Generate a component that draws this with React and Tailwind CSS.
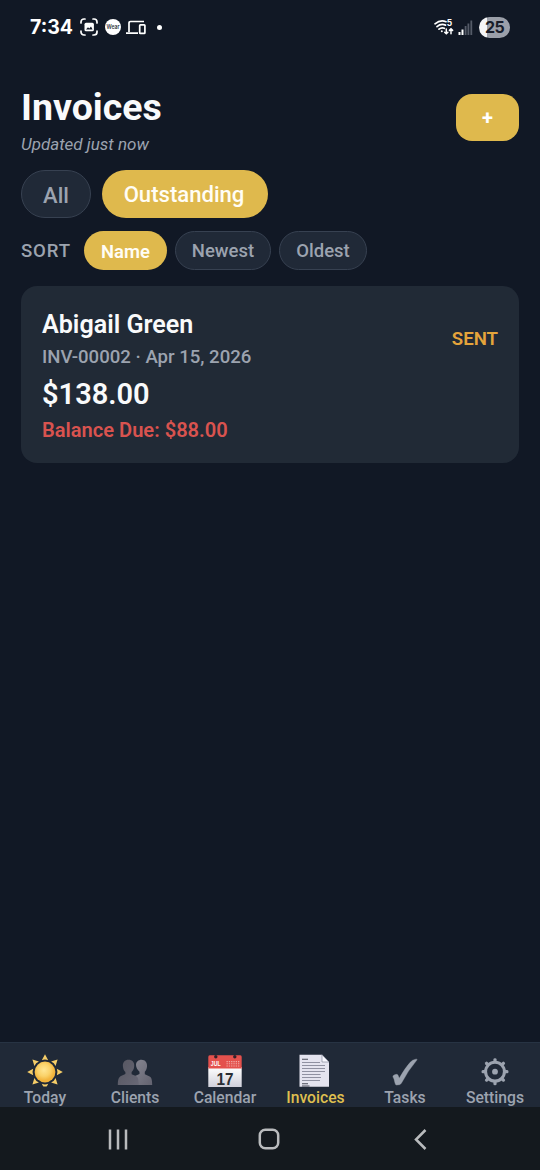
import React from "react";

function StatusBar() {
  return (
    <div className="flex h-[54px] items-center justify-between pl-[30px] pr-[30px] text-white">
      <div className="flex items-center">
        <span className="w-[50px] font-['Inter'] text-[19.5px] font-bold leading-[24px]">7:34</span>
        <svg width="18" height="18" viewBox="0 0 18 18" fill="none" stroke="white" strokeWidth="1.7" strokeLinecap="round">
          <path d="M1 5V4a3 3 0 0 1 3-3h1M13 1h1a3 3 0 0 1 3 3v1M17 13v1a3 3 0 0 1-3 3h-1M5 17H4a3 3 0 0 1-3-3v-1" />
          <rect x="4.5" y="4.7" width="9.4" height="8.6" rx="1.5" fill="white" stroke="none" />
          <path d="M6 11.5l2-2.2 1.3 1.1 1.7-2 1.6 3.1z" fill="#111827" stroke="none" />
        </svg>
        <svg className="ml-[7px]" width="16" height="16" viewBox="0 0 16 16">
          <circle cx="8" cy="8" r="8" fill="white" />
          <text x="8" y="10.2" textAnchor="middle" fontFamily="Inter, sans-serif" fontSize="5.6" fontWeight="600" textLength="13" lengthAdjust="spacingAndGlyphs" fill="#303540">Wear</text>
        </svg>
        <svg className="ml-[5px]" width="20" height="15" viewBox="0 0 20 15" fill="none" stroke="white" strokeWidth="1.7">
          <path d="M3 12V3.2Q3 1.5 4.6 1.5H18M0 13.2H12" />
          <rect x="13.7" y="4.8" width="5.2" height="8.6" rx=".7" />
        </svg>
        <i className="ml-[11px] h-[5px] w-[5px] rounded-full bg-white" />
      </div>
      <div className="flex items-center">
        <svg width="20" height="17" viewBox="0 0 20 17" fill="none" stroke="white" strokeWidth="1.7" strokeLinecap="round">
          <path d="M1 4.8Q6.5 .2 12 2.7M3 7.6Q7 4.3 11.5 6.1M5 10.2Q7.6 8.1 10.3 9.3" />
          <circle cx="7.8" cy="12.2" r="1" fill="white" stroke="none" />
          <path d="M12.3 10v4.5M10.7 13.2l1.6 1.6 1.6-1.6M17 14.8V10M15.4 11.4L17 9.8l1.6 1.6" strokeWidth="1.5" />
          <text x="12.8" y="7.4" fontFamily="Inter, sans-serif" fontSize="8.5" fontWeight="700" fill="white" stroke="none">5</text>
        </svg>
        <svg className="ml-[4px]" width="15" height="15" viewBox="0 0 15 15">
          <path d="M.5 12h2v3h-2zM3.5 9.5h2V15h-2z" fill="white" />
          <path d="M6.7 6h1.8v9H6.7zM9.5 3.5h1.8V15H9.5zM12.4 .4h1.8V15h-1.8z" fill="#555b68" />
        </svg>
        <div className="ml-[6px] flex h-[21px] w-[31px] items-center justify-center rounded-full bg-[linear-gradient(90deg,#f4f5f7_25%,#9b9fa9_25%)] font-['Inter'] text-[16px] font-bold leading-none tracking-[-0.7px] text-[#171c29]">25</div>
      </div>
    </div>
  );
}

function SunIcon() {
  return (
    <svg width="36" height="34" viewBox="0 0 36 34">
      <defs>
        <radialGradient id="sun" cx=".45" cy=".4">
          <stop offset="0" stopColor="#ffe693" />
          <stop offset=".6" stopColor="#fad269" />
          <stop offset="1" stopColor="#f2b43c" />
        </radialGradient>
        <clipPath id="sunbox">
          <path d="M0 0h36v32.500H0z" />
        </clipPath>
      </defs>
      <g clipPath="url(#sunbox)">
        {[0, 45, 90, 135, 180, 225, 270, 315].map((a) => (
          <path key={a} d="M18 .2l3.200 6q-3.200-1.300-6.400 0z" fill="#f5cd68" transform={`rotate(${a} 18 18)`} />
        ))}
      </g>
      <circle cx="18" cy="18" r="10.400" fill="url(#sun)" />
    </svg>
  );
}

function ClientsIcon() {
  return (
    <svg width="36" height="34" viewBox="0 0 36 34">
      <defs>
        <linearGradient id="front" x1="0" x2="1" y2="1">
          <stop offset="0" stopColor="#55555f" />
          <stop offset="1" stopColor="#686876" />
        </linearGradient>
        <linearGradient id="back" x1="0" x2="1" y2="1">
          <stop offset="0" stopColor="#858590" />
          <stop offset="1" stopColor="#62626f" />
        </linearGradient>
      </defs>
      <path d="M24.5 5.7c3.6 0 6 2.8 5.5 7-.3 2.8-1.3 4.3-2.2 5.1v2.4l4.4 2c2.3 1.1 3 3.5 3 8.800H18V22l4.5-2v-2.3C20.600 16 19 13.500 19 11c0-3.200 2.300-5.300 5.500-5.300z" fill="url(#back)" />
      <path d="M11.500 5.700c3.800 0 6.100 2.600 5.700 6.500-.2 2.800-1.300 4.700-2.600 5.700v2.300l4.300 1.700c2.200 1 2.800 3.500 2.800 9.100H.8c0-5.400.8-8 3.200-9.100l4.400-1.800v-2.200c-1.400-1.200-2.300-3-2.500-5.700-.3-3.900 2-6.500 5.600-6.500z" fill="url(#front)" />
    </svg>
  );
}

function CalendarIcon() {
  return (
    <svg width="36" height="34" viewBox="0 0 36 34">
      <defs>
        <linearGradient id="page" x2="0" y2="1">
          <stop offset="0" stopColor="#ffffff" />
          <stop offset="1" stopColor="#d0d0da" />
        </linearGradient>
      </defs>
      <path d="M1.300 13h33.400v20H1.300z" fill="url(#page)" />
      <path d="M1.300 3Q1.300 1.300 2.700 1.300h30.600q1.400 0 1.400 1.700v11.500H1.300z" fill="#e4514d" />
      <circle cx="8.800" cy="2.700" r="1.700" fill="#30202a" />
      <circle cx="27.800" cy="2.700" r="1.700" fill="#30202a" />
      <path d="M19.500 7.600h13M19.500 9.800h13M19.500 12h13" stroke="#f0aaa6" strokeWidth="1.100" strokeDasharray="1.300 1" />
      <text x="3.800" y="12" fontFamily="Liberation Sans, sans-serif" fontSize="6.800" fontWeight="700" textLength="9.800" lengthAdjust="spacingAndGlyphs" fill="white">JUL</text>
      <text x="18" y="31" textAnchor="middle" fontFamily="Liberation Sans, sans-serif" fontSize="17" fontWeight="700" textLength="17" lengthAdjust="spacingAndGlyphs" fill="#292d33">17</text>
    </svg>
  );
}

function InvoiceIcon() {
  return (
    <svg width="36" height="34" viewBox="0 0 36 34">
      <path d="M2.500 .7h22.500l7 7.300v24.700H2.500z" fill="#e4e4ef" />
      <path d="M25 .7v7.300h7z" fill="#f8f8ff" stroke="#74788a" strokeWidth=".6" />
      <path d="M5 8.500H23M5 11.500H28M5 14.500H28M5 17.500H28M5 20.500H23.500M5 23.500H24M5 26.500H23" stroke="#8f91a1" strokeWidth="1.100" />
      <path d="M5 5.300H11M5 29.800H11M5 32H12.500" stroke="#484b58" strokeWidth="1.100" />
    </svg>
  );
}

function CheckIcon() {
  return (
    <svg width="36" height="34" viewBox="0 0 36 34">
      <path d="M30.200 5.600Q21 16.500 14.200 29.500Q13.300 31 9.500 31Q8.400 31 8 29Q7.200 24.500 5.900 22.800Q5.500 21.700 7.700 20.700Q10.400 19.700 11.100 21.300L12.200 24.300Q18 14 23.200 8.300Q25.400 5.700 28.800 5.200Q30 5 30.200 5.600Z" fill="#9ca3af" stroke="#9ca3af" strokeWidth=".4" />
    </svg>
  );
}

function GearIcon() {
  return (
    <svg width="36" height="34" viewBox="0 0 36 34">
      {[0, 45, 90, 135, 180, 225, 270, 315].map((a) => (
        <path key={a} d="M16.400 8.500V5.500Q16.400 4.200 18 4.200T19.600 5.500V8.500z" fill="#9ca3af" transform={`rotate(${a} 18 17.700)`} />
      ))}
      <circle cx="18" cy="17.700" r="9.400" fill="none" stroke="#9ca3af" strokeWidth="3" />
      <circle cx="18" cy="17.700" r="2.900" fill="#9ca3af" />
    </svg>
  );
}

const tabs = [
  { label: "Today", Icon: SunIcon },
  { label: "Clients", Icon: ClientsIcon },
  { label: "Calendar", Icon: CalendarIcon },
  { label: "Invoices", Icon: InvoiceIcon, active: true },
  { label: "Tasks", Icon: CheckIcon },
  { label: "Settings", Icon: GearIcon },
];

export default function App() {
  return (
    <div className="flex h-[1170px] w-[540px] flex-col overflow-hidden bg-[#111825] font-['Roboto',sans-serif]">
      <StatusBar />
      <main className="flex flex-1 flex-col px-[21px] pt-[31px]">
        <header className="flex h-[85px] items-start justify-between">
          <div>
            <h1 className="text-[37.500px] font-bold leading-[44px] text-[#f9fafb]">Invoices</h1>
            <p className="mt-[5px] text-[17px] italic leading-[20px] text-[#9ca3af]">Updated just now</p>
          </div>
          <button className="mt-[8.500px] flex h-[47px] w-[63px] items-center justify-center rounded-[16px] bg-[#dfb94d] pt-[2px] text-[20px] font-bold text-white">+</button>
        </header>
        <div className="flex gap-[11px]">
          <button className="h-[48px] w-[70px] rounded-full border border-[#374151] bg-[#202937] pt-[2px] text-[22px] font-medium text-[#9ca3af]">All</button>
          <button className="h-[48px] w-[166px] rounded-full bg-[#dfb94d] pr-[2px] pt-[2px] text-[22.100px] font-medium text-[#fffdf5]">Outstanding</button>
        </div>
        <div className="mt-[13px] flex items-center">
          <span className="w-[63px] pt-[2px] text-[18.600px] font-medium tracking-[0.850px] text-[#9ca3af]">SORT</span>
          <button className="h-[39px] w-[83px] rounded-full bg-[#dfb94d] pt-[2px] text-[18.400px] font-semibold text-[#fffdf5]">Name</button>
          <button className="ml-[8px] h-[39px] w-[96px] rounded-full border border-[#374151] bg-[#202937] pt-[2px] text-[18.500px] font-medium text-[#9ca3af]">Newest</button>
          <button className="ml-[8px] h-[39px] w-[88px] rounded-full border border-[#374151] bg-[#202937] pt-[2px] text-[18.500px] font-medium text-[#9ca3af]">Oldest</button>
        </div>
        <section className="mt-[16px] flex h-[177px] items-start justify-between rounded-[16px] bg-[#212a36] px-[21px] pt-[24px]">
          <div>
            <h2 className="text-[25.100px] font-semibold leading-[30px] text-[#f9fafb]">Abigail Green</h2>
            <p className="mt-[5px] text-[18.600px] font-medium leading-[24px] text-[#9ca3af]">INV-00002 · Apr 15, 2026</p>
            <p className="mt-[7px] text-[29px] font-semibold leading-[36px] text-[#f9fafb]">$138.00</p>
            <p className="mt-[6px] text-[20.100px] font-semibold leading-[24px] text-[#d9534f]">Balance Due: $88.00</p>
          </div>
          <span className="mt-[17px] text-[18.600px] font-semibold leading-[24px] text-[#e5a43b]">SENT</span>
        </section>
      </main>
      <nav className="grid h-[65px] grid-cols-6 border-t border-[#273343] bg-[#202937] pt-[11px]">
        {tabs.map(({ label, Icon, active }) => (
          <div key={label} className="flex flex-col items-center">
            <Icon />
            <span className={active ? "ml-px mt-px text-[15.700px] font-medium leading-[18px] text-[#dfbf4f]" : "mt-px text-[15.700px] font-medium leading-[18px] text-[#9ca3af]"}>{label}</span>
          </div>
        ))}
      </nav>
      <div className="flex h-[63px] items-center bg-[#14191e] pl-[108px] pt-px">
        <svg width="20" height="21" viewBox="0 0 20 21" stroke="#b9bbbd" strokeWidth="2.500">
          <path d="M2 .5v20M10 .5v20M18 .5v20" />
        </svg>
        <svg className="ml-[130px]" width="22" height="22" viewBox="0 0 22 22" fill="none" stroke="#b9bbbd" strokeWidth="2.500">
          <rect x="1.800" y="1.800" width="18.400" height="18.400" rx="5.500" />
        </svg>
        <svg className="ml-[134px]" width="13" height="21" viewBox="0 0 13 21" fill="none" stroke="#b9bbbd" strokeWidth="2.500">
          <path d="M11.500 1L2 10.500l9.500 9.500" />
        </svg>
      </div>
    </div>
  );
}
